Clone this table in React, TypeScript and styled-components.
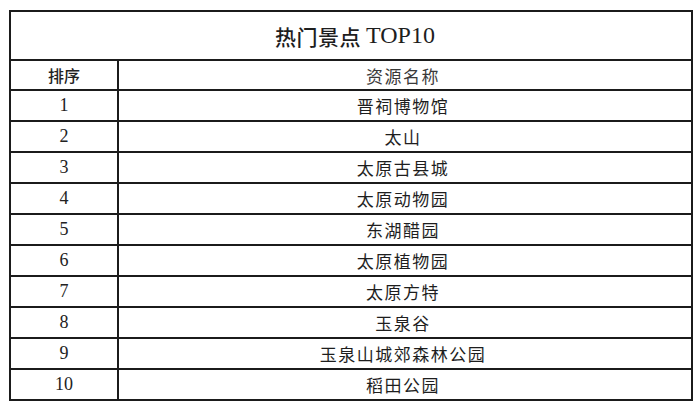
import React from "react";
import styled, { createGlobalStyle } from "styled-components";

const rows = [
  "晋祠博物馆",
  "太山",
  "太原古县城",
  "太原动物园",
  "东湖醋园",
  "太原植物园",
  "太原方特",
  "玉泉谷",
  "玉泉山城郊森林公园",
  "稻田公园"
];

const GlobalStyle = createGlobalStyle`
  body {
    margin: 0;
    background: #ffffff;
    font-family: "Noto Sans CJK SC", "Noto Sans", sans-serif;
    color: #1e1e1e;
  }
`;

const Frame = styled.div`
  margin: 10px 0 0 9px;
  width: 684px;
  box-sizing: border-box;
  border: 2px solid #1b1b1b;
`;

const Title = styled.div`
  height: 47px;
  border-bottom: 2px solid #1b1b1b;
  display: flex;
  align-items: center;
  justify-content: center;
  padding-left: 8px;
  font-size: 21px;
  font-weight: 500;
  letter-spacing: 0.5px;
`;

const Latin = styled.span`
  font-family: "Liberation Serif", serif;
  font-size: 24px;
  font-weight: 400;
  margin-left: 5px;
  letter-spacing: 0;
`;

const Row = styled.div<{ $head?: boolean; $last?: boolean }>`
  display: grid;
  grid-template-columns: 108px 1fr;
  height: ${p => (p.$head ? 28 : 29)}px;
  border-bottom: ${p => (p.$last ? "none" : "2px solid #1b1b1b")};
`;

const Rank = styled.div<{ $head?: boolean }>`
  border-right: 2px solid #1b1b1b;
  display: flex;
  align-items: center;
  justify-content: center;
  font-family: ${p =>
    p.$head ? `"Noto Sans CJK SC", sans-serif` : `"Liberation Serif", serif`};
  font-size: ${p => (p.$head ? 16 : 18)}px;
  font-weight: ${p => (p.$head ? 500 : 400)};
  color: #222;
`;

const Name = styled.div<{ $head?: boolean }>`
  display: flex;
  align-items: center;
  justify-content: center;
  padding-right: 4px;
  font-size: 17px;
  letter-spacing: 1.5px;
  color: ${p => (p.$head ? "#3a3a3a" : "#1e1e1e")};
`;

export default function App() {
  return (
    <>
      <GlobalStyle />
      <Frame>
        <Title>
          热门景点<Latin>TOP10</Latin>
        </Title>
        <Row $head>
          <Rank $head>排序</Rank>
          <Name $head>资源名称</Name>
        </Row>
        {rows.map((name, i) => (
          <Row key={name} $last={i === rows.length - 1}>
            <Rank>{i + 1}</Rank>
            <Name>{name}</Name>
          </Row>
        ))}
      </Frame>
    </>
  );
}
